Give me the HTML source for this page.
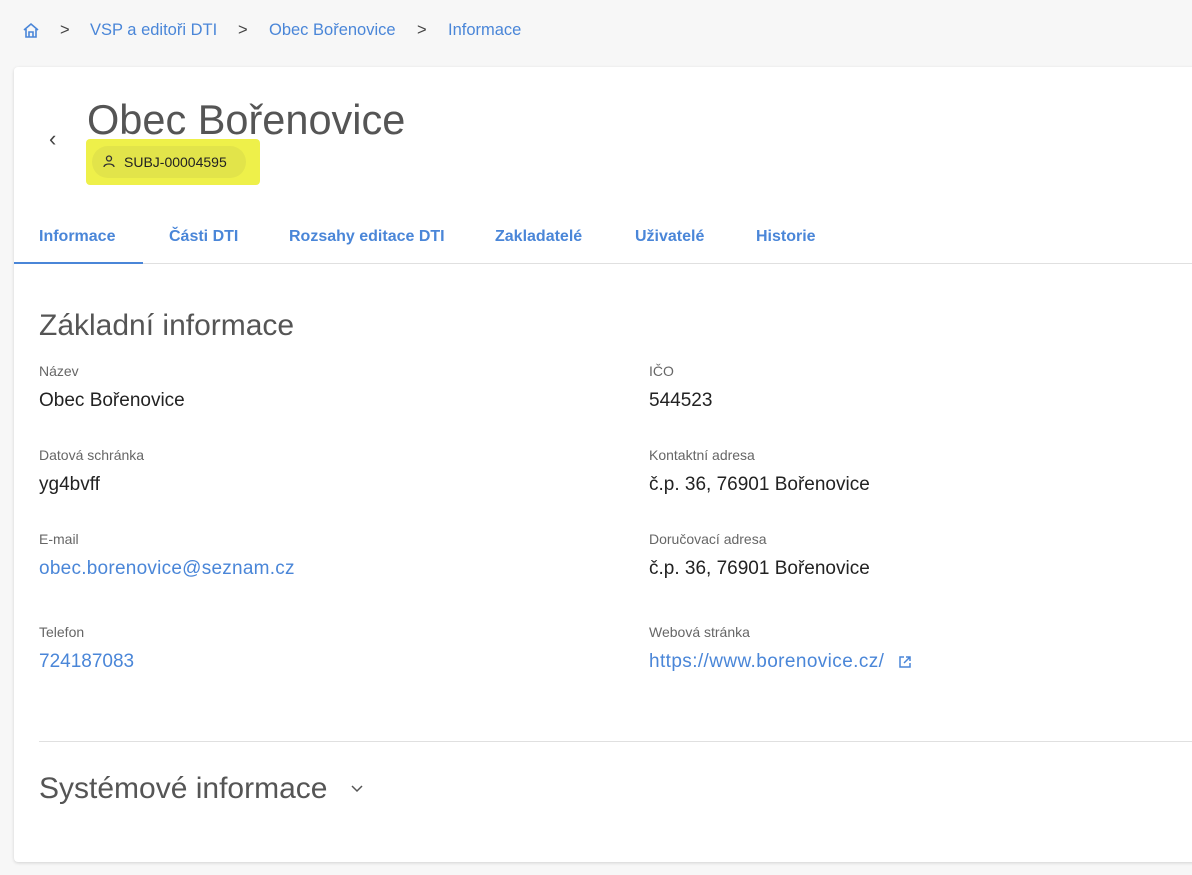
<!DOCTYPE html>
<html><head><meta charset="utf-8"><style>
*{margin:0;padding:0;box-sizing:border-box}
body{width:1192px;height:875px;background:#f7f7f7;font-family:"Liberation Sans",sans-serif;position:relative;overflow:hidden}
.a{position:absolute;white-space:nowrap}
.bc{top:21px;font-size:16.5px;color:#4a86d8}
.card{position:absolute;left:14px;top:67px;width:1190px;height:795px;background:#fff;border-radius:4px;box-shadow:0 1px 3px rgba(0,0,0,.15)}
.tab{top:228px;font-size:16px;font-weight:bold;color:#4a86d8}
.lbl{font-size:14px;color:#666}
.val{font-size:19px;color:#222}
.lnk{font-size:19px;color:#4a86d8}
</style></head><body>
<svg class="a" style="left:22px;top:22px" width="18" height="18" viewBox="0 0 18 18" fill="none" stroke="#4a86d8" stroke-width="1.6"><path d="M2 8 L9 2 L16 8 M4 7 V15 H14 V7 M7 15 V10 H11 V15"/></svg>
<div class="a bc" style="left:60px;color:#444">&gt;</div>
<div class="a bc" style="left:90px">VSP a editoři DTI</div>
<div class="a bc" style="left:238px;color:#444">&gt;</div>
<div class="a bc" style="left:269px">Obec Bořenovice</div>
<div class="a bc" style="left:417px;color:#444">&gt;</div>
<div class="a bc" style="left:448px">Informace</div>
<div class="card"></div>
<div class="a" style="left:49px;top:126px;font-size:22px;color:#444">&lsaquo;</div>
<div class="a" style="left:87px;top:96px;font-size:41.5px;color:#555">Obec Bořenovice</div>
<div class="a" style="left:86px;top:139px;width:174px;height:46px;background:#eef04a;border-radius:4px"></div>
<div class="a" style="left:92px;top:146px;width:154px;height:32px;border-radius:16px;background:#e2e44a"></div>
<svg class="a" style="left:102px;top:154px" width="14" height="14" viewBox="0 0 14 14" fill="none" stroke="#333" stroke-width="1.3"><circle cx="7" cy="4.5" r="2.5"/><path d="M2 13 C2 9 12 9 12 13"/></svg>
<div class="a" style="left:124px;top:154px;font-size:14px;color:#222">SUBJ-00004595</div>
<div class="a tab" style="left:39px">Informace</div>
<div class="a tab" style="left:169px">Části DTI</div>
<div class="a tab" style="left:289px">Rozsahy editace DTI</div>
<div class="a tab" style="left:495px">Zakladatelé</div>
<div class="a tab" style="left:635px">Uživatelé</div>
<div class="a tab" style="left:756px">Historie</div>
<div class="a" style="left:14px;top:263px;width:1178px;height:1px;background:#e0e0e0"></div>
<div class="a" style="left:14px;top:262px;width:129px;height:2px;background:#4a86d8"></div>
<div class="a" style="left:39px;top:309px;font-size:30px;color:#555">Základní informace</div>
<div class="a lbl" style="left:39px;top:363px">Název</div>
<div class="a val" style="left:39px;top:390px">Obec Bořenovice</div>
<div class="a lbl" style="left:649px;top:363px">IČO</div>
<div class="a val" style="left:649px;top:390px">544523</div>
<div class="a lbl" style="left:39px;top:447px">Datová schránka</div>
<div class="a val" style="left:39px;top:474px">yg4bvff</div>
<div class="a lbl" style="left:649px;top:447px">Kontaktní adresa</div>
<div class="a val" style="left:649px;top:474px">č.p. 36, 76901 Bořenovice</div>
<div class="a lbl" style="left:39px;top:531px">E-mail</div>
<div class="a lnk" style="left:39px;top:558px;letter-spacing:0.25px">obec.borenovice@seznam.cz</div>
<div class="a lbl" style="left:649px;top:531px">Doručovací adresa</div>
<div class="a val" style="left:649px;top:558px">č.p. 36, 76901 Bořenovice</div>
<div class="a lbl" style="left:39px;top:624px">Telefon</div>
<div class="a lnk" style="left:39px;top:651px">724187083</div>
<div class="a lbl" style="left:649px;top:624px">Webová stránka</div>
<div class="a lnk" style="left:649px;top:651px;letter-spacing:0.4px">https://www.borenovice.cz/</div>
<svg class="a" style="left:898px;top:655px" width="14" height="14" viewBox="0 0 14 14" fill="none" stroke="#4a86d8" stroke-width="1.5"><path d="M6 2 H2 V12 H12 V8 M8 2 H12 V6 M12 2 L6 8"/></svg>
<div class="a" style="left:39px;top:741px;width:1153px;height:1px;background:#e0e0e0"></div>
<div class="a" style="left:39px;top:772px;font-size:30px;color:#555">Systémové informace</div>
<svg class="a" style="left:350px;top:784px" width="14" height="10" viewBox="0 0 14 10" fill="none" stroke="#555" stroke-width="1.5"><path d="M2 2 L7 7 L12 2"/></svg>
</body></html>
